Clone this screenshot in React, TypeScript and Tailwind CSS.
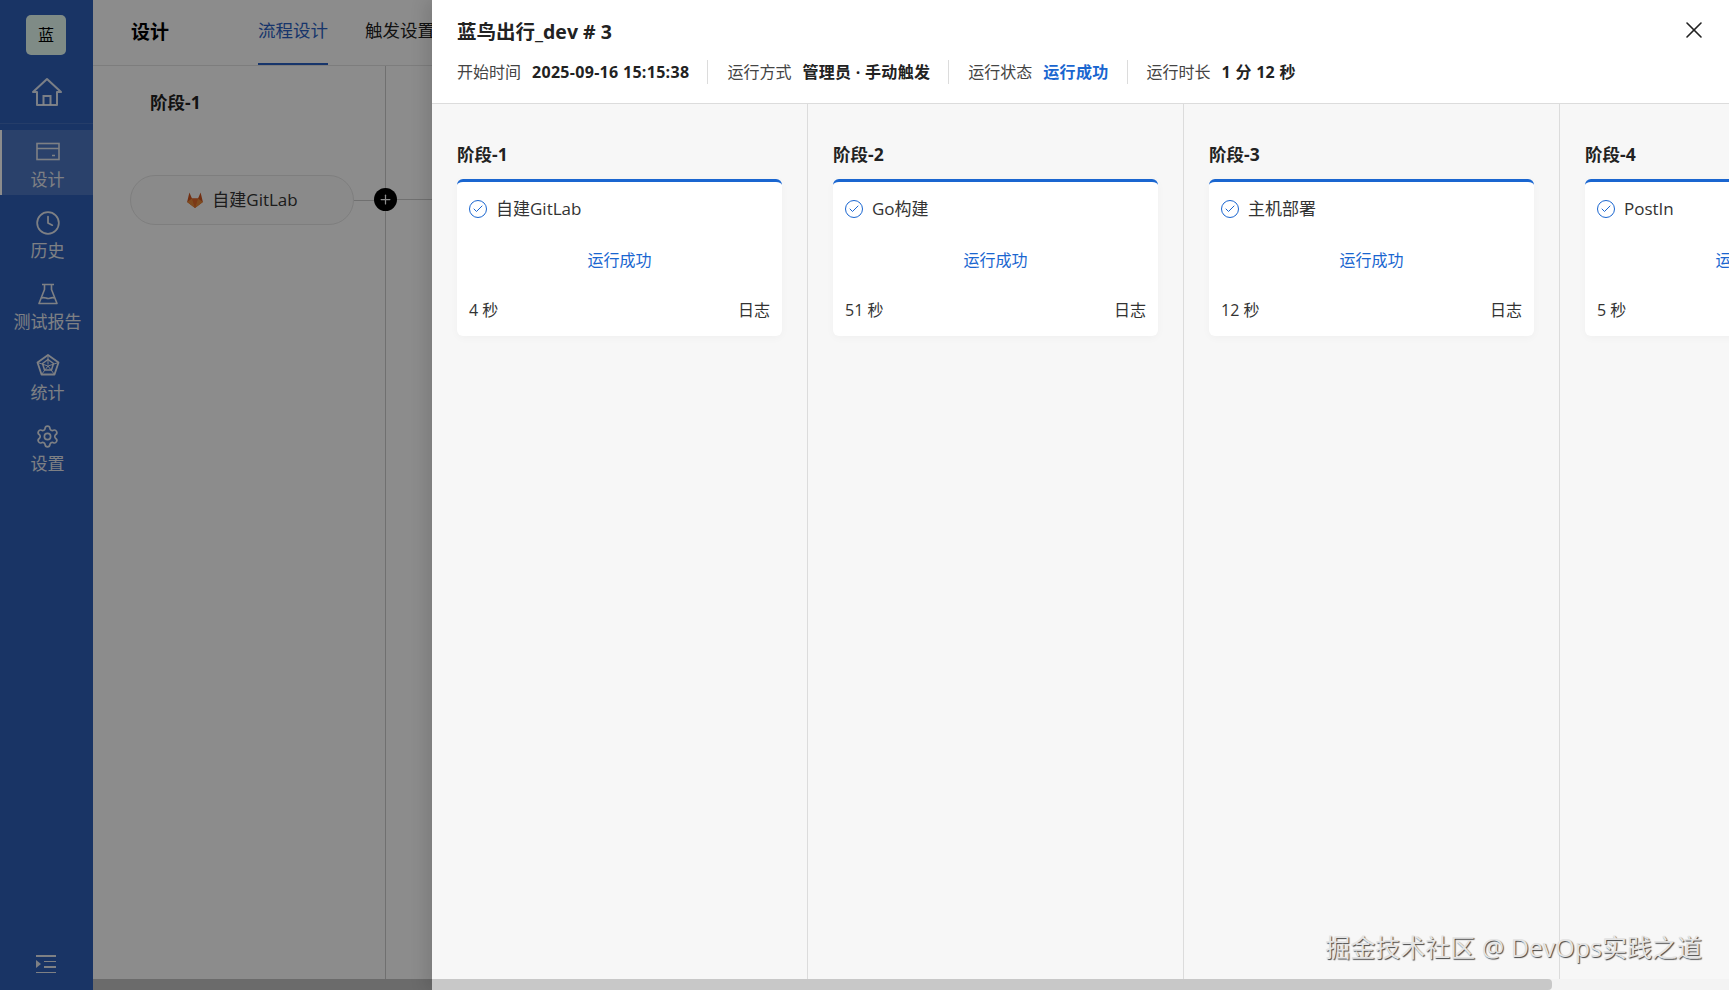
import React from 'react';
import { Check, Clock, Plus, Settings, X } from 'lucide-react';

const font = { fontFamily: '"Open Sans", "Noto Sans CJK SC", sans-serif' };

const navItems = [
  { label: '设计', icon: 'card', active: true },
  { label: '历史', icon: 'clock' },
  { label: '测试报告', icon: 'flask' },
  { label: '统计', icon: 'radar' },
  { label: '设置', icon: 'gear' },
];

const stages = [
  { stage: '阶段-1', job: '自建GitLab', time: '4 秒' },
  { stage: '阶段-2', job: 'Go构建', time: '51 秒' },
  { stage: '阶段-3', job: '主机部署', time: '12 秒' },
  { stage: '阶段-4', job: 'PostIn', time: '5 秒' },
];

const meta = [
  { label: '开始时间', value: '2025-09-16 15:15:38' },
  { label: '运行方式', value: '管理员 · 手动触发' },
  { label: '运行状态', value: '运行成功', blue: true },
  { label: '运行时长', value: '1 分 12 秒' },
];

const HomeIcon = () => (
  <svg width="32" height="30" viewBox="0 0 32 30" fill="none" stroke="currentColor" strokeWidth="2">
    <path d="M2 15 16 2l14 13h-4v13H6V15H2Z" strokeLinejoin="round" />
    <path d="M12.5 28v-9h7v9" />
  </svg>
);

const NavIcon = ({ name }: { name: string }) => {
  if (name === 'card') {
    return (
      <svg width="24" height="20" viewBox="0 0 24 20" fill="none" stroke="currentColor" strokeWidth="1.6">
        <rect x="1" y="1.5" width="22" height="16" />
        <path d="M1 6.5h22M16 13.5h3" />
      </svg>
    );
  }
  if (name === 'clock') return <Clock size={26} strokeWidth={1.6} />;
  if (name === 'flask') {
    return (
      <svg width="22" height="22" viewBox="0 0 22 22" fill="none" stroke="currentColor" strokeWidth="1.6">
        <path d="M5 1.5h12M7.5 1.5v5L2 20.5h18L14.5 6.5v-5" strokeLinejoin="round" />
        <path d="M4.5 15c3-1.500 5 1 7 .5s4-1.500 6-.5" />
      </svg>
    );
  }
  if (name === 'radar') {
    return (
      <svg width="24" height="24" viewBox="0 0 24 24" fill="none" stroke="currentColor" strokeWidth="1.5">
        <path d="M12 2 22.500 9.500 18.500 21.500H5.500L1.500 9.500 12 2Z" strokeWidth="1.8" strokeLinejoin="round" />
        <path d="M12 6.500 17.500 10.500 15.500 17H8.500L6.500 10.500 12 6.500Z" strokeLinejoin="round" />
        <path d="M12 2v9.500M1.500 9.500 12 13l10.500-3.500M5.500 21.500 12 13l6.500 8.500" strokeWidth="1" />
      </svg>
    );
  }
  return <Settings size={25} strokeWidth={1.6} />;
};

const GitlabLogo = () => (
  <svg width="18" height="18" viewBox="0 0 24 24">
    <path d="M12 22.500 1.500 14.500 4.500 2l3.500 8h8l3.500-8 3 12.500L12 22.500Z" fill="#d0561f" />
    <path d="M12 22.500 8 10h8l-4 12.500Z" fill="#e2692a" />
    <path d="M12 22.500 1.500 14.500 8 10l4 12.500Z" fill="#e8893a" />
    <path d="M12 22.500 22.500 14.500 16 10l-4 12.500Z" fill="#e8893a" />
  </svg>
);

const Sidebar = () => (
  <aside className="w-[93px] shrink-0 bg-[#2f60b9] flex flex-col items-center text-[#e6e9f0]">
    <div className="mt-[15px] -ml-[1px] w-10 h-10 rounded-[5px] bg-[#e8fdf5] flex items-center justify-center text-[16px] text-black">
      蓝
    </div>
    <div className="mt-[22px] h-[47px] w-full flex justify-center border-b border-white/10 text-white/85">
      <HomeIcon />
    </div>
    <nav className="mt-[6px] w-full flex flex-col">
      {navItems.map((item) => (
        <div
          key={item.label}
          className={
            item.active
              ? 'h-[65px] mb-[6px] w-full flex flex-col items-center pt-[9px] bg-white/15 border-l-2 border-white'
              : 'h-[65px] mb-[6px] w-full flex flex-col items-center pt-[9px] pl-[2px]'
          }
        >
          <div className="h-[26px] flex items-center justify-center">
            <NavIcon name={item.icon} />
          </div>
          <span className="text-[17px] leading-[24px] mt-[3px] whitespace-nowrap">{item.label}</span>
        </div>
      ))}
    </nav>
    <div className="mt-auto mb-[17px] -ml-[1px] w-5 h-[18px] flex flex-col justify-between items-end relative">
      <span className="block w-full h-[1.500px] bg-current" />
      <span className="block w-[12px] h-[1.500px] bg-current" />
      <span className="block w-[12px] h-[1.500px] bg-current" />
      <span className="block w-full h-[1.500px] bg-current" />
      <span className="absolute left-0 top-[5px] border-y-[4px] border-y-transparent border-l-[5px] border-l-current" />
    </div>
  </aside>
);

const DesignPage = () => (
  <main className="flex-1 min-w-0 flex flex-col bg-white">
    <header className="h-[66px] shrink-0 flex border-b border-[#e3e3e3] pl-[38px]">
      <h1 className="w-[127px] text-[19px] font-bold leading-[64px] text-black">设计</h1>
      <div className="h-[65px] w-[70px] text-[17.500px] leading-[61px] text-[#2a62c4] border-b-[2px] border-[#2a62c4] whitespace-nowrap">
        流程设计
      </div>
      <div className="ml-[37px] text-[17.500px] leading-[61px] text-[#222] whitespace-nowrap">触发设置</div>
    </header>
    <div className="flex-1 flex">
      <div className="w-[293px] shrink-0 border-r border-[#ccc]">
        <div className="pl-[57px] pt-[24px] text-[17.500px] font-bold leading-[24px] text-[#222]">阶段-1</div>
        <div className="ml-[37px] mt-[61px] flex items-center">
          <div className="w-[224px] h-[50px] shrink-0 rounded-full border border-[#e6e6e6] bg-[#fcfcfc] flex items-center justify-center gap-[8px] text-[17px] text-[#333]">
            <GitlabLogo />
            <span>自建GitLab</span>
          </div>
          <div className="flex-1 h-px bg-[#ccc]" />
        </div>
      </div>
      <div className="flex-1 relative">
        <div className="absolute left-[-12px] top-[122px] w-[23px] h-[23px] rounded-full bg-black flex items-center justify-center text-white">
          <Plus size={15} strokeWidth={2} />
        </div>
        <div className="mt-[133px] h-px bg-[#ccc]" />
      </div>
    </div>
    <div className="h-[11px] shrink-0 bg-[#c4c4c4]" />
  </main>
);

const StageColumn = ({ stage, job, time }: { stage: string; job: string; time: string }) => (
  <section className="w-[376px] shrink-0 border-r border-[#dcdcdc] px-[25px] pt-[38px]">
    <h3 className="text-[17.500px] font-bold leading-[24px] text-[#222]">{stage}</h3>
    <div className="mt-[13px] w-[325px] h-[157px] bg-white rounded-[6px] border-t-[3px] border-[#1a66d0] shadow-[0_2px_8px_rgba(0,0,0,0.03)] px-[12px] flex flex-col">
      <div className="mt-[14px] h-[26px] flex items-center gap-[9px] text-[17px] text-[#333]">
        <span className="w-[18px] h-[18px] rounded-full border-[1.500px] border-[#1a66d0] flex items-center justify-center text-[#1a66d0]">
          <Check size={12} strokeWidth={2} />
        </span>
        <span>{job}</span>
      </div>
      <div className="mt-[25px] h-[26px] text-center text-[16px] leading-[26px] text-[#1a66d0]">运行成功</div>
      <div className="mt-[25px] h-[24px] flex justify-between items-center text-[16px] text-[#333]">
        <span>{time}</span>
        <span>日志</span>
      </div>
    </div>
  </section>
);

const RunDrawer = () => (
  <div className="absolute left-[432px] right-0 top-0 bottom-0 bg-[#f7f7f7] flex flex-col shadow-[-6px_0_16px_rgba(0,0,0,0.12)]">
    <div className="h-[104px] shrink-0 bg-white border-b border-[#dcdcdc] pl-[25px] pr-[24px] pt-[18px]">
      <div className="flex items-center justify-between h-[28px]">
        <h2 className="text-[19.500px] font-bold text-[#222]">蓝鸟出行_dev # 3</h2>
        <X size={28} strokeWidth={1.4} className="text-[#222] -mt-1 -mr-[3px]" />
      </div>
      <div className="mt-[14px] flex items-center text-[16px] h-[24px]">
        {meta.map((m, i) => (
          <div key={m.label} className="flex items-center">
            {i > 0 && <span className="w-px h-[24px] bg-[#dcdcdc] ml-[18px] mr-[19px]" />}
            <span className="text-[#444] mr-[11px]">{m.label}</span>
            <span
              className={
                m.blue
                  ? 'font-bold tracking-[0.3px] text-[#1a66d0]'
                  : 'font-bold tracking-[0.3px] text-[#222]'
              }
            >
              {m.value}
            </span>
          </div>
        ))}
      </div>
    </div>
    <div className="flex-1 flex overflow-hidden">
      {stages.map((s) => (
        <StageColumn key={s.stage} {...s} />
      ))}
    </div>
    <div className="h-[11px] shrink-0 bg-[#f3f3f3]">
      <div className="h-full w-[1120px] bg-[#c8c8c8] rounded-r-[4px]" />
    </div>
    <div className="absolute right-[27px] bottom-[27px] text-[25px] leading-[32px] text-[#e4e4e4] whitespace-nowrap [text-shadow:1px_1px_1px_#444]">
      掘金技术社区 @ DevOps实践之道
    </div>
  </div>
);

const App = () => {
  return (
    <div className="relative w-full h-screen overflow-hidden flex" style={font}>
      <Sidebar />
      <DesignPage />
      <div className="absolute inset-0 bg-black/45" />
      <RunDrawer />
    </div>
  );
};

export default App;
